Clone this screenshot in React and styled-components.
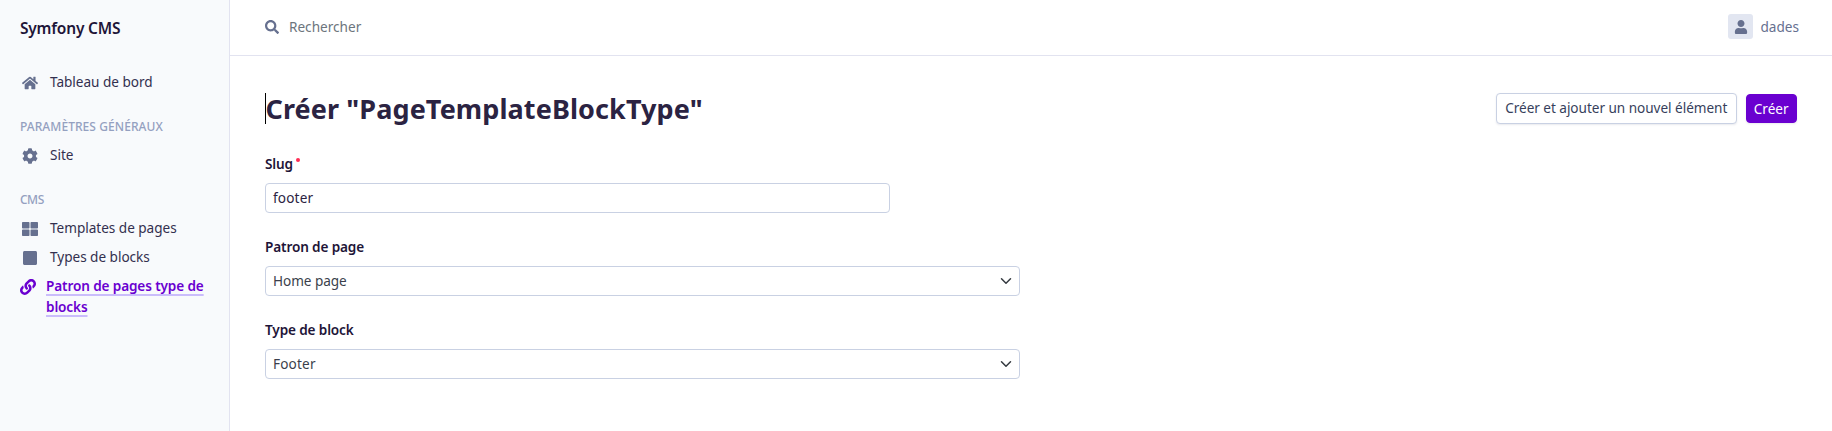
import React from "react";
import styled, { createGlobalStyle } from "styled-components";
import { FaHome, FaCog, FaThLarge, FaSquare, FaLink, FaSearch, FaUser } from "react-icons/fa";

const GlobalStyle = createGlobalStyle`
  *, *::before, *::after { box-sizing: border-box; }
  body {
    margin: 0;
    background: #fff;
    color: #2d2a4a;
    font: 400 13.6px/21px "Noto Sans", "Open Sans", sans-serif;
  }
`;

const Page = styled.div`
  display: grid;
  grid-template-columns: 230px 1fr;
  height: 431px;
  overflow: hidden;
`;

const Sidebar = styled.aside`
  background: #f8fafc;
  border-right: 1px solid #e2e3f0;
  padding: 17px 20px 0;
`;

const Brand = styled.div`
  font-size: 15.5px;
  font-weight: 600;
  line-height: 22px;
  letter-spacing: -0.2px;
  color: #1e1538;
  margin-bottom: 28px;
`;

const Nav = styled.nav`
  display: flex;
  flex-direction: column;
`;

const SectionTitle = styled.div`
  font-size: 12px;
  font-weight: 500;
  line-height: 19px;
  color: #94a0c0;
  margin: 21px 0 4px;
  letter-spacing: ${({ $tracking }) => $tracking || 0}px;
`;

const NavItem = styled.a`
  display: flex;
  align-items: flex-start;
  padding: 4px 0;
  color: ${({ $active }) => ($active ? "#6a00d0" : "#33304f")};
  font-weight: ${({ $active }) => ($active ? 600 : 400)};
  letter-spacing: ${({ $active }) => ($active ? -0.13 : -0.03)}px;
`;

const NavIcon = styled.span`
  display: flex;
  justify-content: center;
  flex: none;
  width: ${({ $active }) => ($active ? 16 : 20)}px;
  margin-right: 10px;
  padding-top: 4px;
  color: ${({ $active }) => ($active ? "#6a00d0" : "#66708f")};
  svg { display: block; height: 16px; width: auto; }
`;

const NavLabel = styled.span`
  text-decoration: ${({ $active }) => ($active ? "underline 2px #cabdfb" : "none")};
  text-underline-offset: 3px;
`;

const Main = styled.main`
  display: flex;
  flex-direction: column;
`;

const TopBar = styled.header`
  display: flex;
  align-items: center;
  justify-content: space-between;
  height: 56px;
  padding: 0 33px 2px 35px;
  border-bottom: 1px solid #e2e3f0;
`;

const Search = styled.div`
  display: flex;
  align-items: center;
  gap: 10px;
  color: #6c757d;
  svg { color: #66708f; }
`;

const User = styled.div`
  display: flex;
  align-items: center;
  gap: 7px;
  color: #66708f;
`;

const Avatar = styled.span`
  display: flex;
  align-items: center;
  justify-content: center;
  width: 25px;
  height: 25px;
  border-radius: 3px;
  background: #e2e6f1;
`;

const ContentHeader = styled.section`
  display: flex;
  align-items: flex-start;
  justify-content: space-between;
  padding: 37px 35px 0;
`;

const Title = styled.h1`
  margin: 0;
  border-left: 1px solid #000;
  font-size: 27px;
  font-weight: 700;
  line-height: 31px;
  letter-spacing: 0.1px;
  color: #2b2342;
  text-indent: -0.5px;
`;

const Actions = styled.div`
  display: flex;
  align-items: center;
  gap: 9px;
`;

const Button = styled.button`
  height: ${({ $primary }) => ($primary ? 29 : 31)}px;
  padding: ${({ $primary }) => ($primary ? "0 7.5px 0 7px" : "0 8.5px 2px 8px")};
  border: 1px solid ${({ $primary }) => ($primary ? "#6a00d0" : "#c9d1e3")};
  border-radius: 4px;
  background: ${({ $primary }) => ($primary ? "#6a00d0" : "#fff")};
  color: ${({ $primary }) => ($primary ? "#fff" : "#373f5c")};
  font: inherit;
  letter-spacing: -0.04px;
  box-shadow: 0 1px 2px rgba(40, 50, 90, 0.1);
`;

const Form = styled.form`
  display: flex;
  flex-direction: column;
  gap: 22px;
  padding: 28px 35px 0;
`;

const Field = styled.div`
  display: flex;
  flex-direction: column;
  gap: 8px;
`;

const Label = styled.label`
  display: flex;
  font-weight: 600;
  line-height: 23px;
  letter-spacing: -0.14px;
  color: #1e1538;
`;

const Required = styled.span`
  width: 4px;
  height: 4px;
  margin: 6px 0 0 3px;
  border-radius: 50%;
  background: #ff2d55;
`;

const Control = styled.div`
  display: flex;
  align-items: center;
  justify-content: space-between;
  width: ${({ $width }) => $width}px;
  height: 30px;
  padding: 0 7px ${({ $lift }) => $lift}px;
  border: 1px solid #c9d1e3;
  border-radius: 4px;
  color: ${({ $color }) => $color};
  letter-spacing: ${({ $tracking }) => $tracking || 0}px;
`;

const Chevron = () => (
  <svg width="12" height="12" viewBox="0 0 16 16" fill="none" stroke="#343a40" strokeWidth="2" strokeLinecap="round" strokeLinejoin="round">
    <path d="m2 5 6 6 6-6" />
  </svg>
);

const Item = ({ icon: Icon, active, children }) => (
  <NavItem $active={active}>
    <NavIcon $active={active}><Icon /></NavIcon>
    <NavLabel $active={active}>{children}</NavLabel>
  </NavItem>
);

const SelectField = ({ label, value, tracking }) => (
  <Field>
    <Label>{label}</Label>
    <Control $width={755} $lift={1} $color="#3b3f4c" $tracking={tracking}>{value}<Chevron /></Control>
  </Field>
);

export default function App() {
  return (
    <>
      <GlobalStyle />
      <Page>
        <Sidebar>
          <Brand>Symfony CMS</Brand>
          <Nav>
            <Item icon={FaHome}>Tableau de bord</Item>
            <SectionTitle $tracking={0.07}>PARAMÈTRES GÉNÉRAUX</SectionTitle>
            <Item icon={FaCog}>Site</Item>
            <SectionTitle $tracking={-0.5}>CMS</SectionTitle>
            <Item icon={FaThLarge}>Templates de pages</Item>
            <Item icon={FaSquare}>Types de blocks</Item>
            <Item icon={FaLink} active>Patron de pages type de blocks</Item>
          </Nav>
        </Sidebar>
        <Main>
          <TopBar>
            <Search><FaSearch size={14} />Rechercher</Search>
            <User><Avatar><FaUser size={14} /></Avatar>dades</User>
          </TopBar>
          <ContentHeader>
            <Title>Créer "PageTemplateBlockType"</Title>
            <Actions>
              <Button type="button">Créer et ajouter un nouvel élément</Button>
              <Button type="button" $primary>Créer</Button>
            </Actions>
          </ContentHeader>
          <Form>
            <Field>
              <Label>Slug<Required /></Label>
              <Control $width={625} $lift={2} $color="#2b2342" $tracking={0.16}>footer</Control>
            </Field>
            <SelectField label="Patron de page" value="Home page" tracking={-0.06} />
            <SelectField label="Type de block" value="Footer" tracking={0.16} />
          </Form>
        </Main>
      </Page>
    </>
  );
}
